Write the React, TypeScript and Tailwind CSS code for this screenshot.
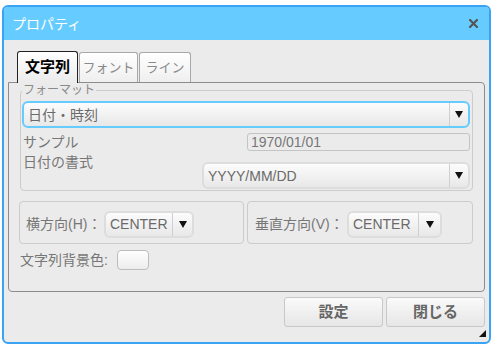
import React from 'react';

const FONT = "font-['Liberation_Sans','Noto_Sans_CJK_JP',sans-serif]";

const Arrow: React.FC = () => (
  <svg width="8" height="7" viewBox="0 0 8 7">
    <polygon points="0,0 8,0 4,7" fill="#111" />
  </svg>
);

const Select: React.FC<{ value: string; focused?: boolean; className?: string; arrowClass?: string }> = ({
  value,
  focused,
  className = '',
  arrowClass = 'w-[19px]',
}) => (
  <div
    className={`flex items-stretch rounded-[6px] border-2 bg-linear-to-b from-[#fcfcfc] to-[#e8e8e8] ${
      focused ? 'border-[#66ccff]' : 'border-[#dddddd]'
    } ${className}`}
  >
    <div className="flex-1 flex items-center pl-[4px] text-[14px] leading-none text-[#6a6a6a]">{value}</div>
    <div className={`flex items-center justify-center border-l border-[#cfcfcf] ${arrowClass}`}>
      <Arrow />
    </div>
  </div>
);

const Tab: React.FC<{ label: string; active?: boolean; className?: string }> = ({ label, active, className = '' }) =>
  active ? (
    <div
      className={`relative z-10 h-[32px] -mb-[1px] flex items-center justify-center border border-b-0 border-[#222] rounded-t-[3px] bg-linear-to-b from-white to-[#ebebeb] text-[15px] font-bold text-black ${className}`}
    >
      {label}
    </div>
  ) : (
    <div
      className={`h-[30px] flex items-center justify-center border border-b-0 border-[#a8a8a8] rounded-t-[3px] bg-linear-to-b from-white to-[#efefef] text-[13px] text-[#8a8a8a] ${className}`}
    >
      {label}
    </div>
  );

const App: React.FC = () => {
  return (
    <div className={`w-[494px] h-[348px] bg-white pt-[5px] pl-[2px] ${FONT}`}>
      <div className="relative w-[489px] h-[339px] border-2 border-[#3aa3f3] rounded-[6px] bg-[#ebebeb] flex flex-col overflow-hidden">
        {/* title bar */}
        <div className="h-[33px] shrink-0 bg-[#66ccff] flex items-center justify-between pl-[8px] pr-[11px]">
          <span className="text-[14px] leading-none text-white">プロパティ</span>
          <svg width="9" height="9" viewBox="0 0 9 9">
            <path d="M1 1 L8 8 M8 1 L1 8" stroke="#555" strokeWidth="2.2" strokeLinecap="square" />
          </svg>
        </div>

        <div className="flex-1 flex flex-col px-[4px] pt-[11px]">
          {/* tabs */}
          <div className="flex items-end gap-[1px] ml-[9px]">
            <Tab label="文字列" active className="w-[61px]" />
            <Tab label="フォント" className="w-[59px]" />
            <Tab label="ライン" className="w-[52px]" />
          </div>

          {/* panel */}
          <div className="h-[210px] border border-[#8c8c8c] rounded-[4px] rounded-tl-none px-[11px] pt-[1px] flex flex-col">
            <fieldset className="border border-[#cccccc] rounded-[4px] pl-[1px] pr-[2px] pb-0">
              <legend className="px-[1px] text-[12px] leading-[13px] text-[#8a8a8a]">フォーマット</legend>
              <Select value="日付・時刻" focused className="mt-[4px] h-[27px]" />
              <div className="flex items-center justify-between mt-[5px]">
                <span className="text-[14px] leading-none text-[#777] pl-[1px]">サンプル</span>
                <div className="w-[223px] h-[18px] border border-[#c4c4c4] rounded-[3px] bg-[#ebebeb] flex items-center pl-[3px] text-[14px] leading-none text-[#777]">
                  1970/01/01
                </div>
              </div>
              <div className="flex items-start justify-between">
                <span className="text-[14px] leading-none text-[#777] pl-[1px] mt-[4px]">日付の書式</span>
                <Select value="YYYY/MM/DD" className="w-[268px] h-[27px] mt-[11px] mb-[1px]" />
              </div>
            </fieldset>

            <div className="flex gap-[3px] mt-[10px] -ml-[1px]">
              <div className="w-[227px] h-[43px] border border-[#cccccc] rounded-[4px] flex items-center pl-[6px] pt-[3px]">
                <span className="w-[78px] whitespace-nowrap text-[14px] leading-none text-[#777]">横方向(H)：</span>
                <Select value="CENTER" className="w-[90px] h-[27px]" arrowClass="w-[20px]" />
              </div>
              <div className="w-[228px] h-[43px] border border-[#cccccc] rounded-[4px] flex items-center pl-[7px] pt-[3px]">
                <span className="w-[92px] whitespace-nowrap text-[14px] leading-none text-[#777]">垂直方向(V)：</span>
                <Select value="CENTER" className="w-[95px] h-[27px]" arrowClass="w-[22px]" />
              </div>
            </div>

            <div className="flex items-center mt-[6px]">
              <span className="w-[97px] shrink-0 whitespace-nowrap text-[14px] leading-none text-[#777]">文字列背景色:</span>
              <div className="w-[32px] h-[20px] border border-[#bdbdbd] rounded-[4px] bg-linear-to-b from-white to-[#ececec]" />
            </div>
          </div>

          {/* buttons */}
          <div className="flex justify-end gap-[3px] mt-[5px]">
            <button className="w-[99px] h-[30px] border border-[#c8c8c8] rounded-[3px] bg-linear-to-b from-[#fafafa] to-[#e6e6e6] text-[15px] font-bold text-[#666]">
              設定
            </button>
            <button className="w-[99px] h-[30px] border border-[#c8c8c8] rounded-[3px] bg-linear-to-b from-[#fafafa] to-[#e6e6e6] text-[15px] font-bold text-[#666]">
              閉じる
            </button>
          </div>
        </div>

        {/* resize grip */}
        <svg className="absolute right-[3px] bottom-[5px]" width="7" height="7" viewBox="0 0 7 7">
          <polygon points="7,0 7,7 0,7" fill="#111" />
        </svg>
      </div>
    </div>
  );
};

export default App;
